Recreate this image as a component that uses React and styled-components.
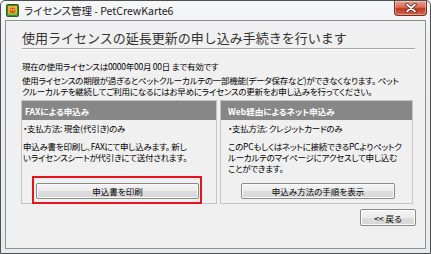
import React from "react";
import styled, { createGlobalStyle } from "styled-components";

const GlobalStyle = createGlobalStyle`
  html, body {
    margin: 0;
    padding: 0;
    background: #ffffff;
  }
  body {
    font-family: "Noto Sans CJK JP", "Noto Sans", sans-serif;
    color: #000;
  }
  * {
    box-sizing: border-box;
  }
`;

const Window = styled.div`
  width: 431px;
  height: 254px;
  border: 1px solid #4d4f52;
  border-radius: 5px 5px 0 0;
  background: linear-gradient(#f6f7f8, #eceef0 40px, #e8eaec);
  display: flex;
  flex-direction: column;
  padding: 0 4px 4px 4px;
  overflow: hidden;
`;

const TitleBar = styled.div`
  height: 19px;
  display: flex;
  align-items: center;
  gap: 5px;
`;

const TitleText = styled.span`
  font-size: 10.5px;
  line-height: 12px;
  color: #1a1a1a;
  white-space: nowrap;
  font-feature-settings: "palt";
`;

const CloseButton = styled.div`
  margin-left: auto;
  margin-right: -1px;
  align-self: flex-start;
  width: 33px;
  height: 15px;
  border: 1px solid #7a2d22;
  border-top: none;
  border-radius: 0 0 4px 4px;
  background: linear-gradient(#e8a393, #d66b53 45%, #c0391f 55%, #d2694c);
  display: flex;
  align-items: center;
  justify-content: center;
  box-shadow: inset 0 0 0 1px rgba(255, 255, 255, 0.35);
`;

const Client = styled.div`
  flex: 1;
  background: #f0f0f0;
  border: 1px solid #8d8f92;
  padding: 9px 10px 0 16px;
  display: flex;
  flex-direction: column;
`;

const Heading = styled.h1`
  margin: 0;
  font-size: 13px;
  font-weight: normal;
  line-height: 16px;
  color: #333;
  padding-bottom: 2px;
  border-bottom: 1px solid #a5a5a5;
  box-shadow: 0 1px 0 #ffffff;
  white-space: nowrap;
`;

const Text = styled.p`
  margin: ${(p) => p.$top || 0}px 0 0 0;
  font-size: 8.5px;
  line-height: 11px;
  white-space: nowrap;
  font-feature-settings: "palt";
  letter-spacing: -0.25px;
`;

const Boxes = styled.div`
  margin-top: 3px;
  margin-left: -1px;
  display: grid;
  grid-template-columns: 196px 193px;
  gap: 3px;
`;

const Box = styled.section`
  border: 1px solid #c4c4c4;
  display: flex;
  flex-direction: column;
`;

const BoxHeader = styled.div`
  height: 19px;
  background: #878787;
  color: #ffffff;
  font-weight: bold;
  font-size: 8.5px;
  display: flex;
  align-items: center;
  padding-left: ${(p) => p.$inset}px;
  white-space: nowrap;
  font-feature-settings: "palt";
`;

const BoxBody = styled.div`
  flex: 1;
  display: flex;
  flex-direction: column;
  padding: 3px 4px 4px ${(p) => p.$inset}px;
`;

const Actions = styled.div`
  margin-top: auto;
  display: flex;
  justify-content: center;
  padding-top: 9px;
  padding-left: ${(p) => p.$shift || 0}px;
`;

const Button = styled.button`
  position: relative;
  width: ${(p) => p.$width}px;
  height: ${(p) => p.$height || 16}px;
  border: 1px solid #8a8a8a;
  border-radius: 2px;
  background: linear-gradient(#f4f4f4, #ebebeb 50%, #dddddd 51%, #d6d6d6);
  font-family: "Noto Sans CJK JP", "Noto Sans", sans-serif;
  font-size: 8.5px;
  color: #000;
  padding: 0;
  display: flex;
  align-items: center;
  justify-content: center;
  font-feature-settings: "palt";
  box-shadow: inset 0 0 0 1px #fbfbfb;
`;

const Highlight = styled.span`
  position: absolute;
  top: -8px;
  left: -5px;
  right: -4px;
  bottom: -6px;
  border: 2px solid #e8141b;
  pointer-events: none;
`;

const Footer = styled.div`
  display: flex;
  justify-content: flex-end;
  margin-top: 5px;
  margin-right: -1px;
`;

const AppIcon = () => (
  <svg width="13" height="13" viewBox="0 0 13 13" style={{ marginLeft: 1 }}>
    <rect x="0.5" y="0.5" width="12" height="12" rx="1" fill="#3f8a2c" stroke="#2c5e1f" />
    <rect x="2" y="2" width="9" height="9" fill="#f3b52b" />
    <circle cx="6.5" cy="6.5" r="3" fill="#e0561c" />
    <circle cx="5.3" cy="5.7" r="0.8" fill="#fff3c0" />
    <circle cx="7.7" cy="5.7" r="0.8" fill="#fff3c0" />
    <rect x="2" y="9" width="9" height="2" fill="#7cc242" />
  </svg>
);

const CloseGlyph = () => (
  <svg width="12" height="10" viewBox="0 0 12 10">
    <path
      d="M2 1.5 L10 8.5 M10 1.5 L2 8.5"
      stroke="#5a1a10"
      strokeWidth="3.4"
      strokeLinecap="round"
    />
    <path
      d="M2 1.5 L10 8.5 M10 1.5 L2 8.5"
      stroke="#ffffff"
      strokeWidth="1.8"
      strokeLinecap="round"
    />
  </svg>
);

export default function App() {
  return (
    <>
      <GlobalStyle />
      <Window>
        <TitleBar>
          <AppIcon />
          <TitleText>ライセンス管理 - PetCrewKarte6</TitleText>
          <CloseButton>
            <CloseGlyph />
          </CloseButton>
        </TitleBar>
        <Client>
          <Heading>使用ライセンスの延長更新の申し込み手続きを行います</Heading>
          <Text $top={12}>現在の使用ライセンスは0000年00月 00日 まで有効です</Text>
          <Text $top={3}>
            使用ライセンスの期限が過ぎるとペットクルーカルテの一部機能(データ保存など)ができなくなります。 ペット
            <br />
            クルーカルテを継続してご利用になるにはお早めにライセンスの更新をお申し込みを行ってください。
          </Text>
          <Boxes>
            <Box>
              <BoxHeader $inset={3}>FAXによる申込み</BoxHeader>
              <BoxBody $inset={1}>
                <Text>・支払方法: 現金(代引き)のみ</Text>
                <Text $top={7}>
                  申込み書を印刷し、FAXにて申し込みます。 新し
                  <br />
                  いライセンスシートが代引きにて送付されます。
                </Text>
                <Actions $shift={-3}>
                  <Button $width={163}>
                    申込書を印刷
                    <Highlight />
                  </Button>
                </Actions>
              </BoxBody>
            </Box>
            <Box>
              <BoxHeader $inset={7}>Web経由によるネット申込み</BoxHeader>
              <BoxBody $inset={7}>
                <Text>・支払方法: クレジットカードのみ</Text>
                <Text $top={7}>
                  このPCもしくはネットに接続できるPCよりペットク
                  <br />
                  ルーカルテのマイページにアクセスして申し込む
                  <br />
                  ことができます。
                </Text>
                <Actions $shift={-10}>
                  <Button $width={154}>申込み方法の手順を表示</Button>
                </Actions>
              </BoxBody>
            </Box>
          </Boxes>
          <Footer>
            <Button $width={56} $height={17}>
              &lt;&lt; 戻る
            </Button>
          </Footer>
        </Client>
      </Window>
    </>
  );
}
